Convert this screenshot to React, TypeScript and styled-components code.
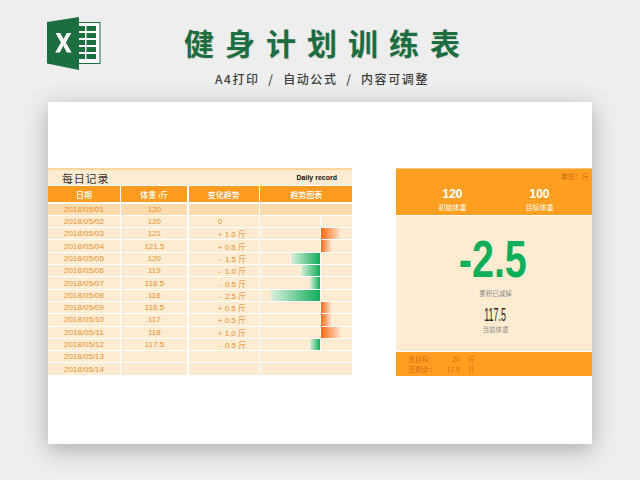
import React from 'react'
import styled, { createGlobalStyle } from 'styled-components'

const GlobalStyle = createGlobalStyle`
  html, body {
    margin: 0;
    padding: 0;
    width: 640px;
    height: 480px;
    overflow: hidden;
    background: #eeeeee;
    font-family: "Liberation Sans", "Noto Sans CJK SC", sans-serif;
  }
`

const Page = styled.div`
  width: 640px;
  height: 480px;
  display: flex;
  flex-direction: column;
  background: #eeeeee;
`
const Header = styled.header`
  height: 102px;
  display: flex;
  align-items: flex-start;
  padding: 17px 0 0 47px;
  box-sizing: border-box;
`
const TitleBlock = styled.div`
  margin-left: 83px;
  width: 276px;
  display: flex;
  flex-direction: column;
  align-items: center;
`
const Title = styled.h1`
  margin: 3px 0 0;
  font-family: "Noto Sans CJK SC", sans-serif;
  font-size: 30px;
  line-height: 44px;
  font-weight: 700;
  letter-spacing: 11px;
  margin-right: -11px;
  white-space: nowrap;
  color: #1b6e40;
  text-shadow: 1px 1px 1px rgba(0, 0, 0, 0.1);
`
const Subtitle = styled.div`
  margin-top: 7px;
  font-family: "Noto Sans CJK SC", sans-serif;
  font-size: 12px;
  line-height: 16px;
  font-weight: 500;
  letter-spacing: 1.6px;
  white-space: pre;
  color: #3c3c3c;
`
const Sheet = styled.main`
  width: 544px;
  height: 342px;
  margin-left: 48px;
  padding-top: 66px;
  box-sizing: border-box;
  display: flex;
  align-items: flex-start;
  gap: 44px;
  background: #ffffff;
  box-shadow: 0 6px 22px rgba(0, 0, 0, 0.28);
`
const Records = styled.section`
  width: 304px;
  height: 208px;
  display: flex;
  flex-direction: column;
`
const RecordsTitle = styled.div`
  height: 15px;
  display: flex;
  justify-content: space-between;
  align-items: center;
  padding: 0 15px 0 14px;
  border-top: 2px solid #fcd59a;
  background: #feecd2;
  margin-bottom: 1px;
`
const RecordsName = styled.span`
  font-family: "Noto Sans CJK SC", sans-serif;
  font-size: 11px;
  letter-spacing: 0.8px;
  color: #333333;
`
const RecordsEnglish = styled.span`
  font-size: 7px;
  font-weight: 700;
  color: #111111;
`
const Row = styled.div<{ $head?: boolean }>`
  display: grid;
  grid-template-columns: 72px 66px 70px 92px;
  column-gap: 1.4px;
  height: ${p => (p.$head ? '16px' : '11.3px')};
  margin-bottom: ${p => (p.$head ? '1.6px' : '1px')};
`
const Cell = styled.div<{ $tone: 'head' | 'strong' | 'plain'; $indent?: boolean }>`
  display: flex;
  align-items: center;
  justify-content: ${p => (p.$indent ? 'flex-start' : 'center')};
  padding-left: ${p => (p.$indent ? '29px' : '0')};
  font-size: 8px;
  white-space: pre;
  color: ${p => (p.$tone === 'head' ? '#ffffff' : '#e8902a')};
  font-weight: ${p => (p.$tone === 'head' ? 500 : 400)};
  background: ${p =>
    p.$tone === 'head' ? '#ff9c1f' : p.$tone === 'strong' ? '#fddbae' : '#feecd2'};
`
const ChartCell = styled(Cell)`
  display: grid;
  grid-template-columns: 61px 31px;
  padding: 0;
`
const LossSide = styled.div<{ $axis: boolean }>`
  height: 100%;
  display: flex;
  justify-content: flex-end;
  border-right: 1px solid ${p => (p.$axis ? '#ffffff' : 'transparent')};
`
const GainSide = styled.div`
  height: 100%;
  display: flex;
`
const Bar = styled.div<{ $kind: 'loss' | 'gain' }>`
  height: 100%;
  background: ${p =>
    p.$kind === 'loss'
      ? 'linear-gradient(to left, #0fae5a, #d9efdc)'
      : 'linear-gradient(to right, #ff6a13, #fde0c8)'};
`
const Panel = styled.aside`
  width: 196px;
  height: 208px;
  display: flex;
  flex-direction: column;
`
const PanelTop = styled.div`
  height: 47px;
  box-sizing: border-box;
  border-top: 1px solid #fcc67c;
  background: #ff9f21;
  display: flex;
  flex-direction: column;
`
const Unit = styled.div`
  height: 14px;
  padding-right: 3px;
  display: flex;
  align-items: center;
  justify-content: flex-end;
  font-size: 7px;
  color: #c8661a;
`
const Goals = styled.div`
  display: grid;
  grid-template-columns: 113px 61px;
  padding-top: 4px;
`
const Goal = styled.div`
  display: flex;
  flex-direction: column;
  align-items: center;
  color: #ffffff;
`
const GoalValue = styled.span`
  font-size: 12px;
  line-height: 14px;
  font-weight: 700;
`
const GoalLabel = styled.span`
  font-size: 7px;
  line-height: 13px;
`
const PanelBody = styled.div`
  height: 135px;
  margin-top: 1px;
  background: #feecd2;
  display: flex;
  flex-direction: column;
  align-items: center;
  padding: 17px 0 0 3px;
  box-sizing: border-box;
`
const Lost = styled.div`
  font-size: 52px;
  line-height: 52px;
  height: 52px;
  margin-right: 5px;
  font-weight: 700;
  color: #0fae5a;
  transform: scaleX(0.76);
`
const BodyLabel = styled.div`
  font-size: 6.5px;
  line-height: 10px;
  color: #8b8b8b;
`
const Current = styled.div`
  font-size: 19px;
  line-height: 20px;
  height: 20px;
  color: #222222;
  transform: scaleX(0.47);
`
const Spaced = styled.div<{ $top: number }>`
  margin-top: ${p => p.$top}px;
`
const PanelBottom = styled.div`
  height: 24px;
  margin-top: 1.5px;
  background: #ff9f21;
  padding: 3px 0 0 12px;
  box-sizing: border-box;
  display: flex;
  flex-direction: column;
`
const Remain = styled.div`
  display: grid;
  grid-template-columns: 36px 16px 12px;
  font-size: 7px;
  line-height: 10px;
  color: #d56b10;
`
const RemainValue = styled.span`
  text-align: right;
`
const RemainUnit = styled.span`
  padding-left: 8px;
`

const records: [string, string, string, number][] = [
  ['2018/05/01', '120', '', 0],
  ['2018/05/02', '120', '0', 0],
  ['2018/05/03', '121', '+ 1.0 斤', 1],
  ['2018/05/04', '121.5', '+ 0.5 斤', 0.5],
  ['2018/05/05', '120', '-  1.5 斤', -1.5],
  ['2018/05/06', '119', '-  1.0 斤', -1],
  ['2018/05/07', '118.5', '-  0.5 斤', -0.5],
  ['2018/05/08', '116', '-  2.5 斤', -2.5],
  ['2018/05/09', '116.5', '+ 0.5 斤', 0.5],
  ['2018/05/10', '117', '+ 0.5 斤', 0.5],
  ['2018/05/11', '118', '+ 1.0 斤', 1],
  ['2018/05/12', '117.5', '-  0.5 斤', -0.5],
  ['2018/05/13', '', '', 0],
  ['2018/05/14', '', '', 0],
]

const gridRows = [9, 16, 23, 30, 37]

const ExcelLogo = () => (
  <svg width="54" height="54" viewBox="0 0 54 54">
    <rect x="31" y="5.5" width="22" height="41" fill="#ffffff" stroke="#1b6e40" strokeWidth="1" />
    {gridRows.map(y => (
      <g key={y} fill="#1b6e40">
        <rect x="32" y={y} width="6" height="5" />
        <rect x="39.500" y={y} width="9.500" height="5" />
      </g>
    ))}
    <polygon points="0,5 32,0 32,53 0,46.5" fill="#1b6e40" />
    <path d="M8.500 16h4.800l3.200 6 3.300-6h4.500l-5.500 9.400 5.800 10h-4.800l-3.500-6.600-3.500 6.600H8.200l5.800-10z" fill="#ffffff" />
  </svg>
)

const App = () => (
  <Page lang="zh-CN">
    <GlobalStyle />
    <Header>
      <ExcelLogo />
      <TitleBlock>
        <Title>健身计划训练表</Title>
        <Subtitle>{'A4打印  /  自动公式  /  内容可调整'}</Subtitle>
      </TitleBlock>
    </Header>
    <Sheet>
      <Records>
        <RecordsTitle>
          <RecordsName>每日记录</RecordsName>
          <RecordsEnglish>Daily record</RecordsEnglish>
        </RecordsTitle>
        <Row $head>
          <Cell $tone="head">日期</Cell>
          <Cell $tone="head">体重 /斤</Cell>
          <Cell $tone="head">变化趋势</Cell>
          <Cell $tone="head">趋势图表</Cell>
        </Row>
        {records.map(([date, weight, change, delta], i) => {
          const tone = i === 0 ? 'strong' : 'plain'
          return (
            <Row key={date}>
              <Cell $tone={tone}>{date}</Cell>
              <Cell $tone={tone}>{weight}</Cell>
              <Cell $tone={tone} $indent>{change}</Cell>
              <ChartCell $tone={tone}>
                <LossSide $axis={change !== ''}>
                  {delta < 0 && <Bar $kind="loss" style={{ width: -delta * 19.6 }} />}
                </LossSide>
                <GainSide>
                  {delta > 0 && <Bar $kind="gain" style={{ width: delta * 19 }} />}
                </GainSide>
              </ChartCell>
            </Row>
          )
        })}
      </Records>
      <Panel>
        <PanelTop>
          <Unit>单位：斤</Unit>
          <Goals>
            <Goal>
              <GoalValue>120</GoalValue>
              <GoalLabel>初始体重</GoalLabel>
            </Goal>
            <Goal>
              <GoalValue>100</GoalValue>
              <GoalLabel>目标体重</GoalLabel>
            </Goal>
          </Goals>
        </PanelTop>
        <PanelBody>
          <Lost>-2.5</Lost>
          <Spaced $top={4}>
            <BodyLabel>累积已减掉</BodyLabel>
          </Spaced>
          <Spaced $top={6}>
            <Current>117.5</Current>
          </Spaced>
          <BodyLabel>当前体重</BodyLabel>
        </PanelBody>
        <PanelBottom>
          <Remain>
            <span>总目标：</span>
            <RemainValue>20</RemainValue>
            <RemainUnit>斤</RemainUnit>
          </Remain>
          <Remain>
            <span>还剩余：</span>
            <RemainValue>17.5</RemainValue>
            <RemainUnit>斤</RemainUnit>
          </Remain>
        </PanelBottom>
      </Panel>
    </Sheet>
  </Page>
)

export default App
